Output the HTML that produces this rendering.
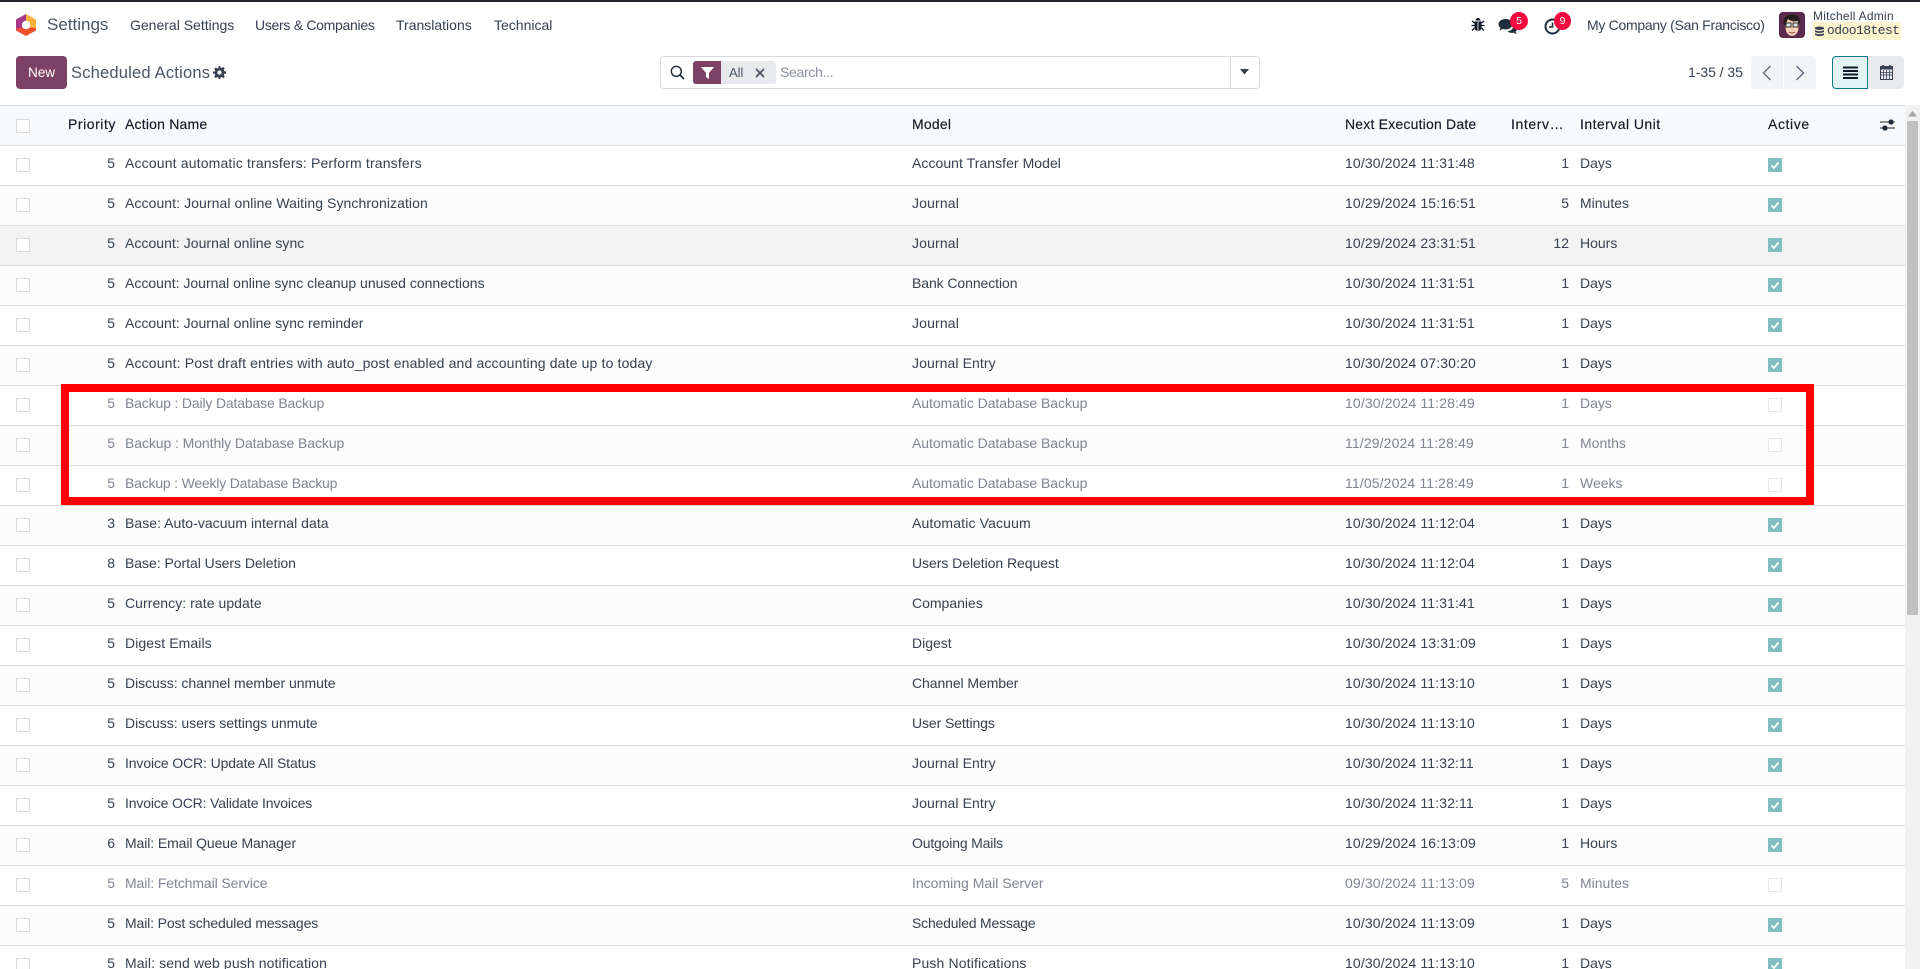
<!DOCTYPE html>
<html><head><meta charset="utf-8"><title>Scheduled Actions</title>
<style>
*{box-sizing:border-box}
html,body{margin:0;padding:0;width:1920px;height:969px;overflow:hidden;background:#fff}
body{font-family:"Liberation Sans",sans-serif;font-size:14px;color:#374151;position:relative}
.abs,.r span,.h span{position:absolute;white-space:nowrap}
.abs{line-height:20px}
.r,.h{position:absolute;left:0;width:1905px;height:40px;border-bottom:1px solid #d8dadd}
.r span,.h span{top:7px;line-height:20px}
.h{top:105px;height:41px;background:#f8f9fa;border-top:1px solid #d8dadd;color:#111827}
.h span{top:8px;-webkit-text-stroke:.15px #111827}
.r:nth-of-type(even){background:#fcfcfc}
.hov{background:#f3f3f3!important}
.c{left:16px;top:12px!important;width:14px;height:14px;border:1px solid #d8dadd;background:#fff;-webkit-text-stroke:0!important}
.h .c{top:13px!important}
.p{right:1790px;text-align:right}
.n{left:125px}.m{left:912px}.d{left:1345px;letter-spacing:.13px}.i{right:336px;text-align:right}.u{left:1580px}
.a{left:1768px;top:12px!important;width:14px;height:14px;background:#80bfc1}
.a svg{position:absolute;left:2px;top:2px}
.off{left:1768px;top:12px!important;width:14px;height:14px;border:1px solid #e6e7e9;background:#fff}
.mt span{color:#7f8591}
.mt .c{background:#fff}
#rows{position:absolute;left:0;top:146px;width:1905px}
#rows .r{position:relative}
.menu{top:15px;font-size:14px;color:#374151}
</style></head><body>
<div class="abs" style="left:0;top:0;width:1920px;height:2px;background:#212529"></div>

<svg class="abs" style="left:16px;top:14px" width="20" height="22" viewBox="0 0 20 22"><path d="M10 0L0 5.500V16.500L4 18.800L7 13.500V8.500L10 7Z" fill="#a8398a"/><path d="M10 0L20 5.500V14H14V8.500L10 7Z" fill="#fbb13c"/><path d="M0 16.500L10 22L20 16.500V14L14 13.500L10 15L6 13.500L0 15Z" fill="#f0502c"/><circle cx="10" cy="11" r="4.200" fill="#fff"/></svg>
<div class="abs" style="left:47px;top:15px;font-size:17px;color:#4b5563">Settings</div>
<div class="abs menu" style="left:130px">General Settings</div>
<div class="abs menu" style="left:255px;letter-spacing:-.29px">Users &amp; Companies</div>
<div class="abs menu" style="left:396px">Translations</div>
<div class="abs menu" style="left:494px">Technical</div>

<svg class="abs" style="left:1471px;top:17px" width="14" height="15" viewBox="0 0 14 15"><path d="M4.500 3.500a2.500 2.500 0 0 1 5 0Z" fill="#111827"/><path d="M3.500 4.500h7v6a3.500 3.500 0 0 1-7 0Z" fill="#111827"/><path d="M1 4l2.500 2M13 4l-2.500 2M.5 8.500h3M13.500 8.500h-3M1 13.500l2.500-2.500M13 13.500l-2.500-2.500" stroke="#111827" stroke-width="1.300" fill="none"/><path d="M7 5v9" stroke="#fff" stroke-width=".8"/></svg>
<svg class="abs" style="left:1498px;top:18px" width="20" height="17" viewBox="0 0 20 17"><path d="M7.500 1C3.400 1 .5 3.300.5 6.200c0 1.500.8 2.800 2 3.700L1.500 12.500l3.300-1.500c.9.300 1.800.4 2.700.4 4 0 7-2.300 7-5.200S11.500 1 7.500 1Z" fill="#1f2d3d"/><path d="M16 6.500c2 .8 3.300 2.300 3.300 4 0 1.200-.6 2.200-1.600 3l.9 2.500-3.100-1.400c-2.200.6-4.800.1-6.300-1.300 3.700-.1 6.800-3.100 6.800-6.800Z" fill="#1f2d3d"/></svg>
<div class="abs" style="left:1510px;top:12px;width:18px;height:18px;border-radius:50%;background:#f6083f;color:#fff;font-size:10.500px;line-height:18px;text-align:center">5</div>
<svg class="abs" style="left:1544px;top:18px" width="17" height="17" viewBox="0 0 17 17"><circle cx="8.500" cy="8.500" r="7" fill="none" stroke="#1f2d3d" stroke-width="2"/><path d="M8.500 4.500v4.500H5" fill="none" stroke="#1f2d3d" stroke-width="1.600"/></svg>
<div class="abs" style="left:1554px;top:12px;width:17px;height:18px;border-radius:50%;background:#f6083f;color:#fff;font-size:10.500px;line-height:18px;text-align:center">9</div>
<div class="abs" style="left:1587px;top:15px;font-size:14px;letter-spacing:-.29px">My Company (San Francisco)</div>
<svg class="abs" style="left:1779px;top:12px" width="26" height="26" viewBox="0 0 26 26"><rect width="26" height="26" rx="4" fill="#5c2a4e"/><path d="M6 12c0-5 3-8 7-8s8 3 7 9l-1 6c-1 3-4 5-6 5s-5-2-6-5Z" fill="#f6d2b8"/><path d="M5 13C3 6 8 2 13 3c2-1 8 0 8 6l-1 5-1-5c-4 1-8 0-10-2-1 2-2 4-2 6Z" fill="#2a1d1c"/><rect x="7" y="11" width="5" height="4" fill="#dfe4e6" stroke="#333" stroke-width="1"/><rect x="14" y="11" width="5" height="4" fill="#dfe4e6" stroke="#333" stroke-width="1"/><path d="M10 20q3 2 6 0" stroke="#8b4a3a" fill="none"/></svg>
<div class="abs" style="left:1813px;top:6px;font-size:12px;line-height:20px;letter-spacing:.25px">Mitchell Admin</div>
<div class="abs" style="left:1813px;top:22px;width:88px;height:18px;background:#fdf3cd"></div>
<svg class="abs" style="left:1815px;top:26px" width="9" height="11" viewBox="0 0 9 11"><path d="M0 1.500Q4.500-.5 9 1.500V3Q4.500 5 0 3ZM0 4.200Q4.500 6.200 9 4.200V6Q4.500 8 0 6ZM0 7.200Q4.500 9.200 9 7.200V9Q4.500 11.200 0 9Z" fill="#374151"/></svg>
<div class="abs" style="left:1827px;top:21px;font:13px/20px 'Liberation Mono',monospace;color:#374151;letter-spacing:-.55px">odoo18test</div>

<div class="abs" style="left:16px;top:56px;width:51px;height:33px;background:#7c4164;border-radius:4px;color:#fff;text-align:center;line-height:33px;font-size:13.500px">New</div>
<div class="abs" style="left:71px;top:63px;font-size:16.500px;color:#4b5563;letter-spacing:.2px">Scheduled Actions</div>
<svg class="abs" style="left:213px;top:66px" width="13" height="13" viewBox="0 0 24 24"><path d="M24 14V10l-3.300-.6a9 9 0 0 0-.9-2.100l1.900-2.800-2.800-2.800-2.800 1.900a9 9 0 0 0-2.100-.9L13.400 0h-2.800l-.6 3.700a9 9 0 0 0-2.100.9L5.100 2.700 2.300 5.500l1.900 2.800a9 9 0 0 0-.9 2.100L0 10v4l3.300.6a9 9 0 0 0 .9 2.100l-1.900 2.800 2.800 2.800 2.800-1.900a9 9 0 0 0 2.100.9l.6 3.700h2.800l.6-3.700a9 9 0 0 0 2.100-.9l2.800 1.900 2.800-2.800-1.900-2.800a9 9 0 0 0 .9-2.100ZM12 16a4 4 0 1 1 0-8 4 4 0 0 1 0 8Z" fill="#374151"/></svg>

<div class="abs" style="left:660px;top:56px;width:600px;height:33px;border:1px solid #d8dadd;border-radius:4px"></div>
<div class="abs" style="left:1230px;top:57px;width:1px;height:31px;background:#d8dadd"></div>
<svg class="abs" style="left:670px;top:65px" width="15" height="15" viewBox="0 0 15 15"><circle cx="6.300" cy="6.300" r="5" fill="none" stroke="#1f2937" stroke-width="1.400"/><path d="M10 10l4 4" stroke="#1f2937" stroke-width="1.700"/></svg>
<div class="abs" style="left:693px;top:61px;width:83px;height:23px;background:#e7e9ed;border-radius:3px"></div>
<div class="abs" style="left:693px;top:61px;width:28px;height:23px;background:#7c4164;border-radius:3px 0 0 3px"></div>
<svg class="abs" style="left:701px;top:67px" width="13" height="12" viewBox="0 0 13 12"><path d="M0 0H13L8 6V12L5 10V6Z" fill="#fff"/></svg>
<div class="abs" style="left:729px;top:63px;font-size:13px;color:#4b5563">All</div>
<svg class="abs" style="left:755px;top:68px" width="10" height="10" viewBox="0 0 10 10"><path d="M1 1L9 9M9 1L1 9" stroke="#4b5563" stroke-width="1.800"/></svg>
<div class="abs" style="left:780px;top:62px;font-size:14px;color:#8b919c;letter-spacing:-.3px">Search...</div>
<svg class="abs" style="left:1240px;top:69px" width="9" height="6" viewBox="0 0 9 6"><path d="M0 0H9L4.500 5.500Z" fill="#374151"/></svg>

<div class="abs" style="left:1688px;top:62px;font-size:14px;letter-spacing:-.05px">1-35 / 35</div>
<div class="abs" style="left:1751px;top:56px;width:32px;height:33px;background:#f3f4f6;border-radius:4px 0 0 4px"></div>
<div class="abs" style="left:1784px;top:56px;width:32px;height:33px;background:#f3f4f6;border-radius:0 4px 4px 0"></div>
<svg class="abs" style="left:1762px;top:65px" width="10" height="16" viewBox="0 0 10 16"><path d="M8.500 1L1.500 8l7 7" fill="none" stroke="#6b7280" stroke-width="1.500"/></svg>
<svg class="abs" style="left:1795px;top:65px" width="10" height="16" viewBox="0 0 10 16"><path d="M1.500 1l7 7-7 7" fill="none" stroke="#6b7280" stroke-width="1.500"/></svg>
<div class="abs" style="left:1832px;top:56px;width:36px;height:33px;background:#e2f3f3;border:1px solid #017e84;border-radius:4px 0 0 4px"></div>
<div class="abs" style="left:1868px;top:56px;width:36px;height:33px;background:#e7e9ed;border-radius:0 4px 4px 0"></div>
<svg class="abs" style="left:1843px;top:66px" width="15" height="13" viewBox="0 0 15 13"><path d="M0 1.500H15M0 5H15M0 8.500H15M0 12H15" stroke="#111827" stroke-width="2"/></svg>
<svg class="abs" style="left:1880px;top:64px" width="13" height="16" viewBox="0 0 13 16"><rect x=".5" y="2.500" width="12" height="13" fill="none" stroke="#374151"/><rect x="0" y="2.500" width="13" height="3" fill="#374151"/><path d="M3 1v3M10 1v3" stroke="#374151" stroke-width="1.600"/><path d="M.5 8.500h12M.5 11h12M3.500 6v9M6.500 6v9M9.500 6v9" stroke="#374151" stroke-width=".8"/></svg>

<div class="h"><span class="c"></span>
<span style="left:68px;letter-spacing:.55px">Priority</span><span class="n" style="letter-spacing:.2px">Action Name</span><span class="m" style="letter-spacing:.2px">Model</span><span class="d" style="letter-spacing:.2px">Next Execution Date</span><span style="left:1511px;letter-spacing:.6px">Interv…</span><span class="u" style="letter-spacing:.45px">Interval Unit</span><span style="left:1768px;letter-spacing:.6px">Active</span>
<svg style="position:absolute;left:1880px;top:12px" width="15" height="14" viewBox="0 0 15 14"><path d="M0 4h15M0 10h15" stroke="#1f2937" stroke-width="1.100"/><circle cx="11" cy="4" r="2.600" fill="#1f2937"/><circle cx="5" cy="10" r="2.600" fill="#1f2937"/></svg></div>

<div id="rows">
<div class="r"><span class="c"></span><span class="p">5</span><span class="n" style="letter-spacing:.16px">Account automatic transfers: Perform transfers</span><span class="m" style="letter-spacing:.05px">Account Transfer Model</span><span class="d">10/30/2024 11:31:48</span><span class="i">1</span><span class="u">Days</span><span class="a"><svg width="10" height="10" viewBox="0 0 10 10"><path d="M1.500 5.500L4 8l4.500-5.500" fill="none" stroke="#fff" stroke-width="1.800"/></svg></span></div>
<div class="r"><span class="c"></span><span class="p">5</span><span class="n" style="letter-spacing:.08px">Account: Journal online Waiting Synchronization</span><span class="m" style="letter-spacing:.15px">Journal</span><span class="d">10/29/2024 15:16:51</span><span class="i">5</span><span class="u">Minutes</span><span class="a"><svg width="10" height="10" viewBox="0 0 10 10"><path d="M1.500 5.500L4 8l4.500-5.500" fill="none" stroke="#fff" stroke-width="1.800"/></svg></span></div>
<div class="r hov"><span class="c"></span><span class="p">5</span><span class="n" style="letter-spacing:.04px">Account: Journal online sync</span><span class="m" style="letter-spacing:.15px">Journal</span><span class="d">10/29/2024 23:31:51</span><span class="i">12</span><span class="u">Hours</span><span class="a"><svg width="10" height="10" viewBox="0 0 10 10"><path d="M1.500 5.500L4 8l4.500-5.500" fill="none" stroke="#fff" stroke-width="1.800"/></svg></span></div>
<div class="r"><span class="c"></span><span class="p">5</span><span class="n">Account: Journal online sync cleanup unused connections</span><span class="m" style="letter-spacing:-.08px">Bank Connection</span><span class="d">10/30/2024 11:31:51</span><span class="i">1</span><span class="u">Days</span><span class="a"><svg width="10" height="10" viewBox="0 0 10 10"><path d="M1.500 5.500L4 8l4.500-5.500" fill="none" stroke="#fff" stroke-width="1.800"/></svg></span></div>
<div class="r"><span class="c"></span><span class="p">5</span><span class="n" style="letter-spacing:.03px">Account: Journal online sync reminder</span><span class="m" style="letter-spacing:.15px">Journal</span><span class="d">10/30/2024 11:31:51</span><span class="i">1</span><span class="u">Days</span><span class="a"><svg width="10" height="10" viewBox="0 0 10 10"><path d="M1.500 5.500L4 8l4.500-5.500" fill="none" stroke="#fff" stroke-width="1.800"/></svg></span></div>
<div class="r"><span class="c"></span><span class="p">5</span><span class="n" style="letter-spacing:.15px">Account: Post draft entries with auto_post enabled and accounting date up to today</span><span class="m" style="letter-spacing:.1px">Journal Entry</span><span class="d">10/30/2024 07:30:20</span><span class="i">1</span><span class="u">Days</span><span class="a"><svg width="10" height="10" viewBox="0 0 10 10"><path d="M1.500 5.500L4 8l4.500-5.500" fill="none" stroke="#fff" stroke-width="1.800"/></svg></span></div>
<div class="r mt"><span class="c"></span><span class="p">5</span><span class="n" style="letter-spacing:-.16px">Backup : Daily Database Backup</span><span class="m" style="letter-spacing:-.05px">Automatic Database Backup</span><span class="d">10/30/2024 11:28:49</span><span class="i">1</span><span class="u">Days</span><span class="off"></span></div>
<div class="r mt"><span class="c"></span><span class="p">5</span><span class="n" style="letter-spacing:-.08px">Backup : Monthly Database Backup</span><span class="m" style="letter-spacing:-.05px">Automatic Database Backup</span><span class="d">11/29/2024 11:28:49</span><span class="i">1</span><span class="u">Months</span><span class="off"></span></div>
<div class="r mt"><span class="c"></span><span class="p">5</span><span class="n" style="letter-spacing:-.2px">Backup : Weekly Database Backup</span><span class="m" style="letter-spacing:-.05px">Automatic Database Backup</span><span class="d">11/05/2024 11:28:49</span><span class="i">1</span><span class="u">Weeks</span><span class="off"></span></div>
<div class="r"><span class="c"></span><span class="p">3</span><span class="n" style="letter-spacing:.04px">Base: Auto-vacuum internal data</span><span class="m" style="letter-spacing:.15px">Automatic Vacuum</span><span class="d">10/30/2024 11:12:04</span><span class="i">1</span><span class="u">Days</span><span class="a"><svg width="10" height="10" viewBox="0 0 10 10"><path d="M1.500 5.500L4 8l4.500-5.500" fill="none" stroke="#fff" stroke-width="1.800"/></svg></span></div>
<div class="r"><span class="c"></span><span class="p">8</span><span class="n" style="letter-spacing:-.04px">Base: Portal Users Deletion</span><span class="m" style="letter-spacing:-.05px">Users Deletion Request</span><span class="d">10/30/2024 11:12:04</span><span class="i">1</span><span class="u">Days</span><span class="a"><svg width="10" height="10" viewBox="0 0 10 10"><path d="M1.500 5.500L4 8l4.500-5.500" fill="none" stroke="#fff" stroke-width="1.800"/></svg></span></div>
<div class="r"><span class="c"></span><span class="p">5</span><span class="n" style="letter-spacing:.06px">Currency: rate update</span><span class="m">Companies</span><span class="d">10/30/2024 11:31:41</span><span class="i">1</span><span class="u">Days</span><span class="a"><svg width="10" height="10" viewBox="0 0 10 10"><path d="M1.500 5.500L4 8l4.500-5.500" fill="none" stroke="#fff" stroke-width="1.800"/></svg></span></div>
<div class="r"><span class="c"></span><span class="p">5</span><span class="n" style="letter-spacing:.09px">Digest Emails</span><span class="m">Digest</span><span class="d">10/30/2024 13:31:09</span><span class="i">1</span><span class="u">Days</span><span class="a"><svg width="10" height="10" viewBox="0 0 10 10"><path d="M1.500 5.500L4 8l4.500-5.500" fill="none" stroke="#fff" stroke-width="1.800"/></svg></span></div>
<div class="r"><span class="c"></span><span class="p">5</span><span class="n" style="letter-spacing:-.04px">Discuss: channel member unmute</span><span class="m" style="letter-spacing:-.08px">Channel Member</span><span class="d">10/30/2024 11:13:10</span><span class="i">1</span><span class="u">Days</span><span class="a"><svg width="10" height="10" viewBox="0 0 10 10"><path d="M1.500 5.500L4 8l4.500-5.500" fill="none" stroke="#fff" stroke-width="1.800"/></svg></span></div>
<div class="r"><span class="c"></span><span class="p">5</span><span class="n" style="letter-spacing:-.04px">Discuss: users settings unmute</span><span class="m" style="letter-spacing:-.1px">User Settings</span><span class="d">10/30/2024 11:13:10</span><span class="i">1</span><span class="u">Days</span><span class="a"><svg width="10" height="10" viewBox="0 0 10 10"><path d="M1.500 5.500L4 8l4.500-5.500" fill="none" stroke="#fff" stroke-width="1.800"/></svg></span></div>
<div class="r"><span class="c"></span><span class="p">5</span><span class="n" style="letter-spacing:-.12px">Invoice OCR: Update All Status</span><span class="m" style="letter-spacing:.1px">Journal Entry</span><span class="d">10/30/2024 11:32:11</span><span class="i">1</span><span class="u">Days</span><span class="a"><svg width="10" height="10" viewBox="0 0 10 10"><path d="M1.500 5.500L4 8l4.500-5.500" fill="none" stroke="#fff" stroke-width="1.800"/></svg></span></div>
<div class="r"><span class="c"></span><span class="p">5</span><span class="n" style="letter-spacing:-.16px">Invoice OCR: Validate Invoices</span><span class="m" style="letter-spacing:.1px">Journal Entry</span><span class="d">10/30/2024 11:32:11</span><span class="i">1</span><span class="u">Days</span><span class="a"><svg width="10" height="10" viewBox="0 0 10 10"><path d="M1.500 5.500L4 8l4.500-5.500" fill="none" stroke="#fff" stroke-width="1.800"/></svg></span></div>
<div class="r"><span class="c"></span><span class="p">6</span><span class="n" style="letter-spacing:-.1px">Mail: Email Queue Manager</span><span class="m" style="letter-spacing:-.17px">Outgoing Mails</span><span class="d">10/29/2024 16:13:09</span><span class="i">1</span><span class="u">Hours</span><span class="a"><svg width="10" height="10" viewBox="0 0 10 10"><path d="M1.500 5.500L4 8l4.500-5.500" fill="none" stroke="#fff" stroke-width="1.800"/></svg></span></div>
<div class="r mt"><span class="c"></span><span class="p">5</span><span class="n" style="letter-spacing:-.1px">Mail: Fetchmail Service</span><span class="m">Incoming Mail Server</span><span class="d">09/30/2024 11:13:09</span><span class="i">5</span><span class="u">Minutes</span><span class="off"></span></div>
<div class="r"><span class="c"></span><span class="p">5</span><span class="n" style="letter-spacing:-.13px">Mail: Post scheduled messages</span><span class="m" style="letter-spacing:-.2px">Scheduled Message</span><span class="d">10/30/2024 11:13:09</span><span class="i">1</span><span class="u">Days</span><span class="a"><svg width="10" height="10" viewBox="0 0 10 10"><path d="M1.500 5.500L4 8l4.500-5.500" fill="none" stroke="#fff" stroke-width="1.800"/></svg></span></div>
<div class="r"><span class="c"></span><span class="p">5</span><span class="n" style="letter-spacing:.11px">Mail: send web push notification</span><span class="m" style="letter-spacing:.14px">Push Notifications</span><span class="d">10/30/2024 11:13:10</span><span class="i">1</span><span class="u">Days</span><span class="a"><svg width="10" height="10" viewBox="0 0 10 10"><path d="M1.500 5.500L4 8l4.500-5.500" fill="none" stroke="#fff" stroke-width="1.800"/></svg></span></div>
</div>

<div class="abs" style="left:1905px;top:105px;width:15px;height:864px;background:#f1f1f1"></div>
<div class="abs" style="left:1907px;top:121px;width:11px;height:494px;background:#c1c1c1"></div>
<svg class="abs" style="left:1908px;top:111px" width="9" height="6" viewBox="0 0 9 6"><path d="M0 5.500H9L4.500 0Z" fill="#a3a3a3"/></svg>

<div class="abs" style="left:61px;top:384px;width:1753px;height:121px;border:8px solid #ff0000"></div>
</body></html>
